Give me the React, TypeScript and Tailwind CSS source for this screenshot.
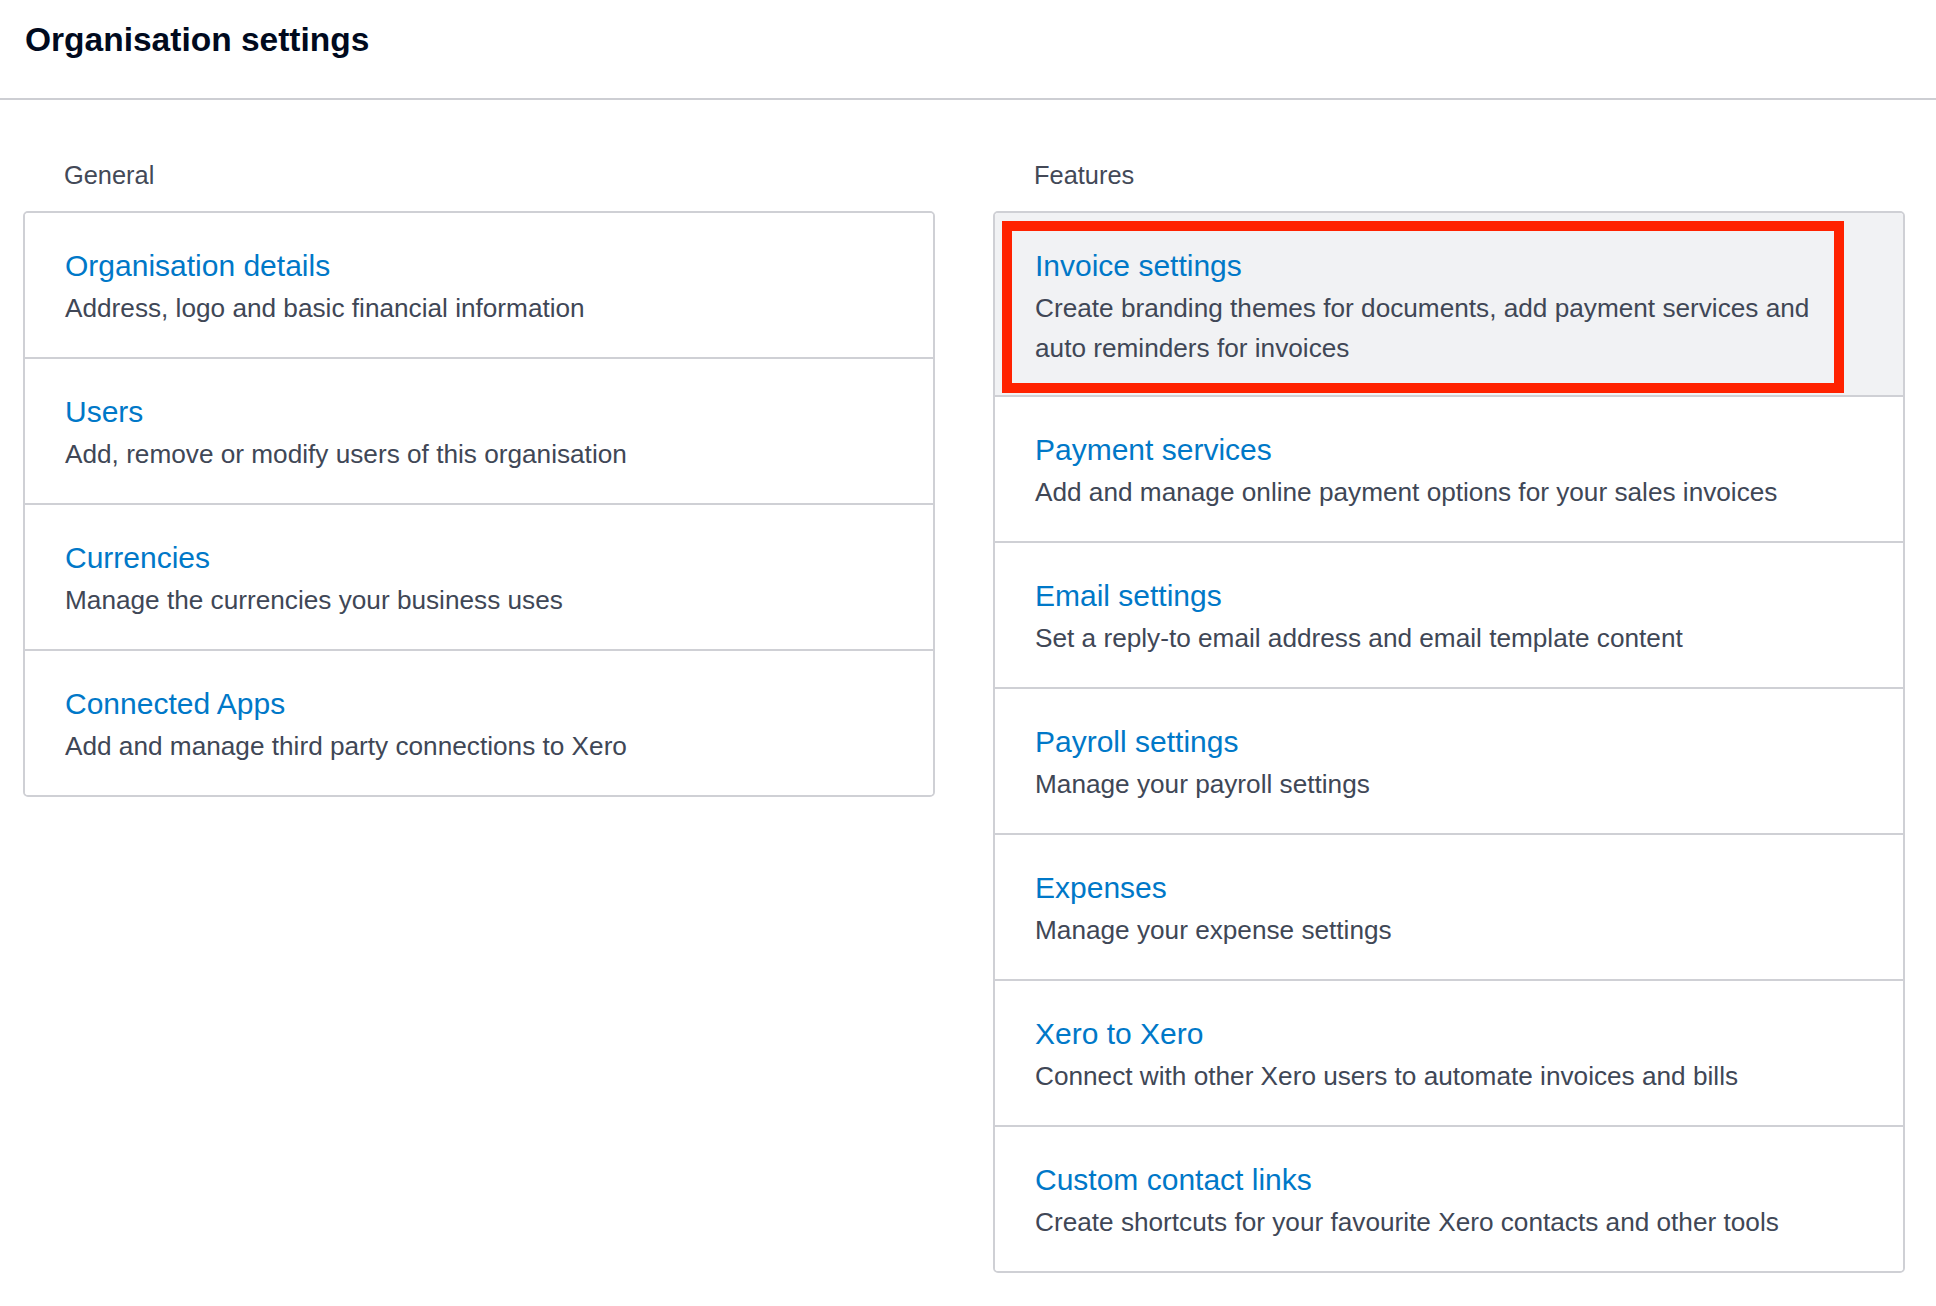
type Item = { title: string; desc: string; highlighted?: boolean };

const general: Item[] = [
  { title: 'Organisation details', desc: 'Address, logo and basic financial information' },
  { title: 'Users', desc: 'Add, remove or modify users of this organisation' },
  { title: 'Currencies', desc: 'Manage the currencies your business uses' },
  { title: 'Connected Apps', desc: 'Add and manage third party connections to Xero' },
];

const features: Item[] = [
  {
    title: 'Invoice settings',
    desc: 'Create branding themes for documents, add payment services and auto reminders for invoices',
    highlighted: true,
  },
  { title: 'Payment services', desc: 'Add and manage online payment options for your sales invoices' },
  { title: 'Email settings', desc: 'Set a reply-to email address and email template content' },
  { title: 'Payroll settings', desc: 'Manage your payroll settings' },
  { title: 'Expenses', desc: 'Manage your expense settings' },
  { title: 'Xero to Xero', desc: 'Connect with other Xero users to automate invoices and bills' },
  { title: 'Custom contact links', desc: 'Create shortcuts for your favourite Xero contacts and other tools' },
];

function Row({ item }: { item: Item }) {
  return (
    <a
      href="#"
      className={`relative block px-[40px] pt-[34px] ${
        item.highlighted ? 'bg-[#f1f2f4] pb-[27px]' : 'bg-white pb-[29px]'
      }`}
    >
      <div className="text-[30px] leading-[37px] text-[#0078c8]">{item.title}</div>
      <div className="mt-[4px] pr-[24px] text-[26.2px] leading-[40px] text-[#404756]">{item.desc}</div>
      {item.highlighted && (
        // annotation box drawn over the row
        <div className="pointer-events-none absolute left-[7px] top-[8px] h-[172px] w-[842px] border-[10px] border-[#ff2200]" />
      )}
    </a>
  );
}

function Section({ label, items }: { label: string; items: Item[] }) {
  return (
    <section className="w-[912px]">
      <h2 className="pl-[41px] text-[25.4px] leading-[30px] text-[#434957]">{label}</h2>
      <div className="mt-[21px] overflow-hidden rounded-[5px] border-2 border-[#cfd0d5] divide-y-2 divide-[#cfd0d5]">
        {items.map((it) => (
          <Row key={it.title} item={it} />
        ))}
      </div>
    </section>
  );
}

export default function App() {
  return (
    <div className="min-h-screen bg-white" style={{ fontFamily: '"Liberation Sans", Arial, sans-serif' }}>
      <header className="h-[99.5px] border-b-2 border-[#cdced3] pl-[25px] pt-[20px]">
        <h1 className="text-[33.5px] font-bold leading-[40px] text-[#000a1e]">Organisation settings</h1>
      </header>
      <main className="flex gap-[58px] pl-[23px] pt-[60px] pb-[34px]">
        <Section label="General" items={general} />
        <Section label="Features" items={features} />
      </main>
    </div>
  );
}
